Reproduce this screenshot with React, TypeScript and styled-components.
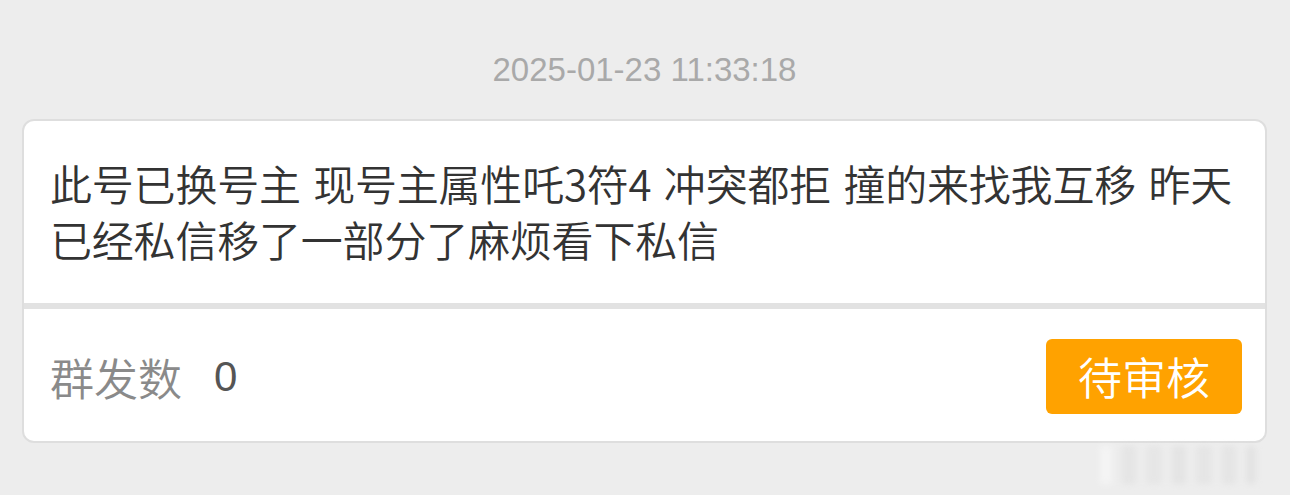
import React from "react";
import styled, { createGlobalStyle } from "styled-components";

const Global = createGlobalStyle`
  html, body { margin: 0; padding: 0; background: #ededed; }
  body { font-family: "Noto Sans CJK SC", "Noto Sans", sans-serif; }
`;

const Page = styled.div`
  position: relative;
  width: 1290px;
  height: 495px;
  overflow: hidden;
  background: #ededed;
  display: flex;
  flex-direction: column;
  align-items: stretch;
  padding: 0 23px 0 22px;
  box-sizing: border-box;
`;

const Time = styled.div`
  font-family: "Liberation Sans", Arial, sans-serif;
  font-size: 33px;
  color: #a9a9a9;
  text-align: center;
  line-height: 40px;
  margin-top: 50px;
  margin-bottom: 29px;
`;

const Card = styled.div`
  background: #e2e2e2;
  border: 2px solid #dedede;
  border-radius: 12px;
  overflow: hidden;
  display: flex;
  flex-direction: column;
  gap: 6px;
`;

const Body = styled.div`
  background: #fff;
  padding: 34px 26px 36px 26px;
  font-size: 42px;
  font-weight: 350;
  line-height: 56px;
  color: #333;
  letter-spacing: -0.2px;
  word-spacing: 3.2px;
`;

const Footer = styled.div`
  background: #fff;
  height: 132px;
  display: flex;
  align-items: center;
  padding: 3px 23px 0 26px;
  box-sizing: border-box;
`;

const Label = styled.span`
  font-size: 44px;
  font-weight: 350;
  color: #8a8a8a;
  margin-right: 32px;
`;

const Count = styled.span`
  font-family: "Liberation Sans", Arial, sans-serif;
  font-size: 42px;
  color: #555;
`;

const Spacer = styled.div`
  flex: 1;
`;

const Status = styled.div`
  background: #ffa200;
  color: #fff;
  font-size: 44px;
  font-weight: 350;
  height: 75px;
  line-height: 75px;
  padding: 0 32px;
  border-radius: 6px;
`;

const Watermark = styled.div`
  position: absolute;
  left: 1100px;
  top: 446px;
  width: 180px;
  height: 38px;
  display: flex;
  gap: 10px;
  filter: blur(3px);
  opacity: 0.4;
`;

const Bar = styled.div<{ $w: number; $c: string }>`
  width: ${(p) => p.$w}px;
  height: 100%;
  background: ${(p) => p.$c};
`;

export default function App() {
  return (
    <>
      <Global />
      <Page>
        <Time>2025-01-23 11:33:18</Time>
        <Card>
          <Body>
            此号已换号主 现号主属性吒3符4 冲突都拒 撞的来找我互移 昨天
            <br />
            已经私信移了一部分了麻烦看下私信
          </Body>
          <Footer>
            <Label>群发数</Label>
            <Count>0</Count>
            <Spacer />
            <Status>待审核</Status>
          </Footer>
        </Card>
        <Watermark>
          <Bar $w={12} $c="#ffffff" />
          <Bar $w={14} $c="#d8d8d8" />
          <Bar $w={16} $c="#dcdcdc" />
          <Bar $w={14} $c="#d6d6d6" />
          <Bar $w={16} $c="#dadada" />
          <Bar $w={14} $c="#d8d8d8" />
          <Bar $w={10} $c="#d4d4d4" />
        </Watermark>
      </Page>
    </>
  );
}
